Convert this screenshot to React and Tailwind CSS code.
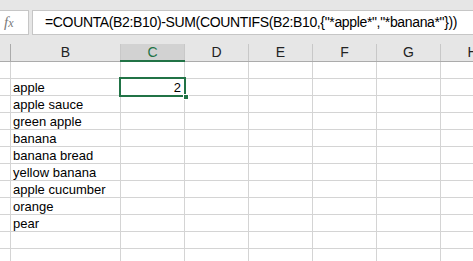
import React from 'react';

// Sheet data for column B, rows 1..12
const rows = [
  '',
  'apple',
  'apple sauce',
  'green apple',
  'banana',
  'banana bread',
  'yellow banana',
  'apple cucumber',
  'orange',
  'pear',
  '',
  '',
];

const cols = ['D', 'E', 'F', 'G', 'H'];

const formula = '=COUNTA(B2:B10)-SUM(COUNTIFS(B2:B10,{"*apple*","*banana*"}))';

export default function App() {
  return (
    <div
      className="relative w-[473px] h-[261px] overflow-hidden bg-white"
      style={{ fontFamily: '"Liberation Sans", Arial, sans-serif' }}
    >
      {/* Formula bar */}
      <div className="h-[44px] bg-[#e6e6e6] flex items-start pt-[10px]">
        <div className="w-[29px] h-[25px] bg-white border border-[#c6c6c6] border-l-0 flex items-center pl-[4px]">
          <span
            className="text-[#7a7a7a] text-[15px] italic leading-none"
            style={{ fontFamily: '"Liberation Serif", "Times New Roman", serif' }}
          >
            f<span className="text-[12px]">x</span>
          </span>
        </div>
        <div className="ml-[3px] flex-1 min-w-0 h-[25px] bg-white border border-[#c6c6c6] border-r-0 flex items-center pl-[12px] text-[14px] tracking-[-0.35px] text-black whitespace-nowrap overflow-hidden">
          {formula}
        </div>
      </div>

      {/* Column headers */}
      <div className="flex h-[18px] bg-[#e6e6e6] border-b border-[#ababab] text-[14px] text-[#222]">
        <div className="w-[11px] shrink-0 border-r border-[#ababab]" />
        <div className="w-[110px] shrink-0 border-r border-[#c8c8c8] flex items-center justify-center">B</div>
        <div className="w-[64px] shrink-0 border-r border-[#c8c8c8] bg-[#d2d2d2] text-[#217346] flex items-center justify-center relative">
          C
          <div className="absolute left-[-1px] right-[-1px] bottom-[-1px] h-[2px] bg-[#217346]" />
        </div>
        {cols.map((c) => (
          <div key={c} className="w-[64px] shrink-0 border-r border-[#c8c8c8] flex items-center justify-center">
            {c}
          </div>
        ))}
      </div>

      {/* Grid rows */}
      {rows.map((text, i) => (
        <div key={i} className="flex h-[17px] border-b border-[#d4d4d4] text-[13px] text-black leading-[17px]">
          <div className="w-[11px] shrink-0 border-r border-[#d4d4d4]" />
          <div className="w-[110px] shrink-0 border-r border-[#d4d4d4] pl-[2px] whitespace-nowrap">{text}</div>
          <div className="w-[64px] shrink-0 border-r border-[#d4d4d4] pr-[3px] text-right">{i === 1 ? '2' : ''}</div>
          {cols.map((c) => (
            <div key={c} className="w-[64px] shrink-0 border-r border-[#d4d4d4]" />
          ))}
        </div>
      ))}

      {/* Active cell C2 */}
      <div className="absolute left-[119px] top-[77px] w-[67px] h-[20px] border-2 border-[#217346]">
        <div className="absolute right-[-5px] bottom-[-5px] w-[6px] h-[6px] bg-[#217346] border border-white" />
      </div>
    </div>
  );
}
